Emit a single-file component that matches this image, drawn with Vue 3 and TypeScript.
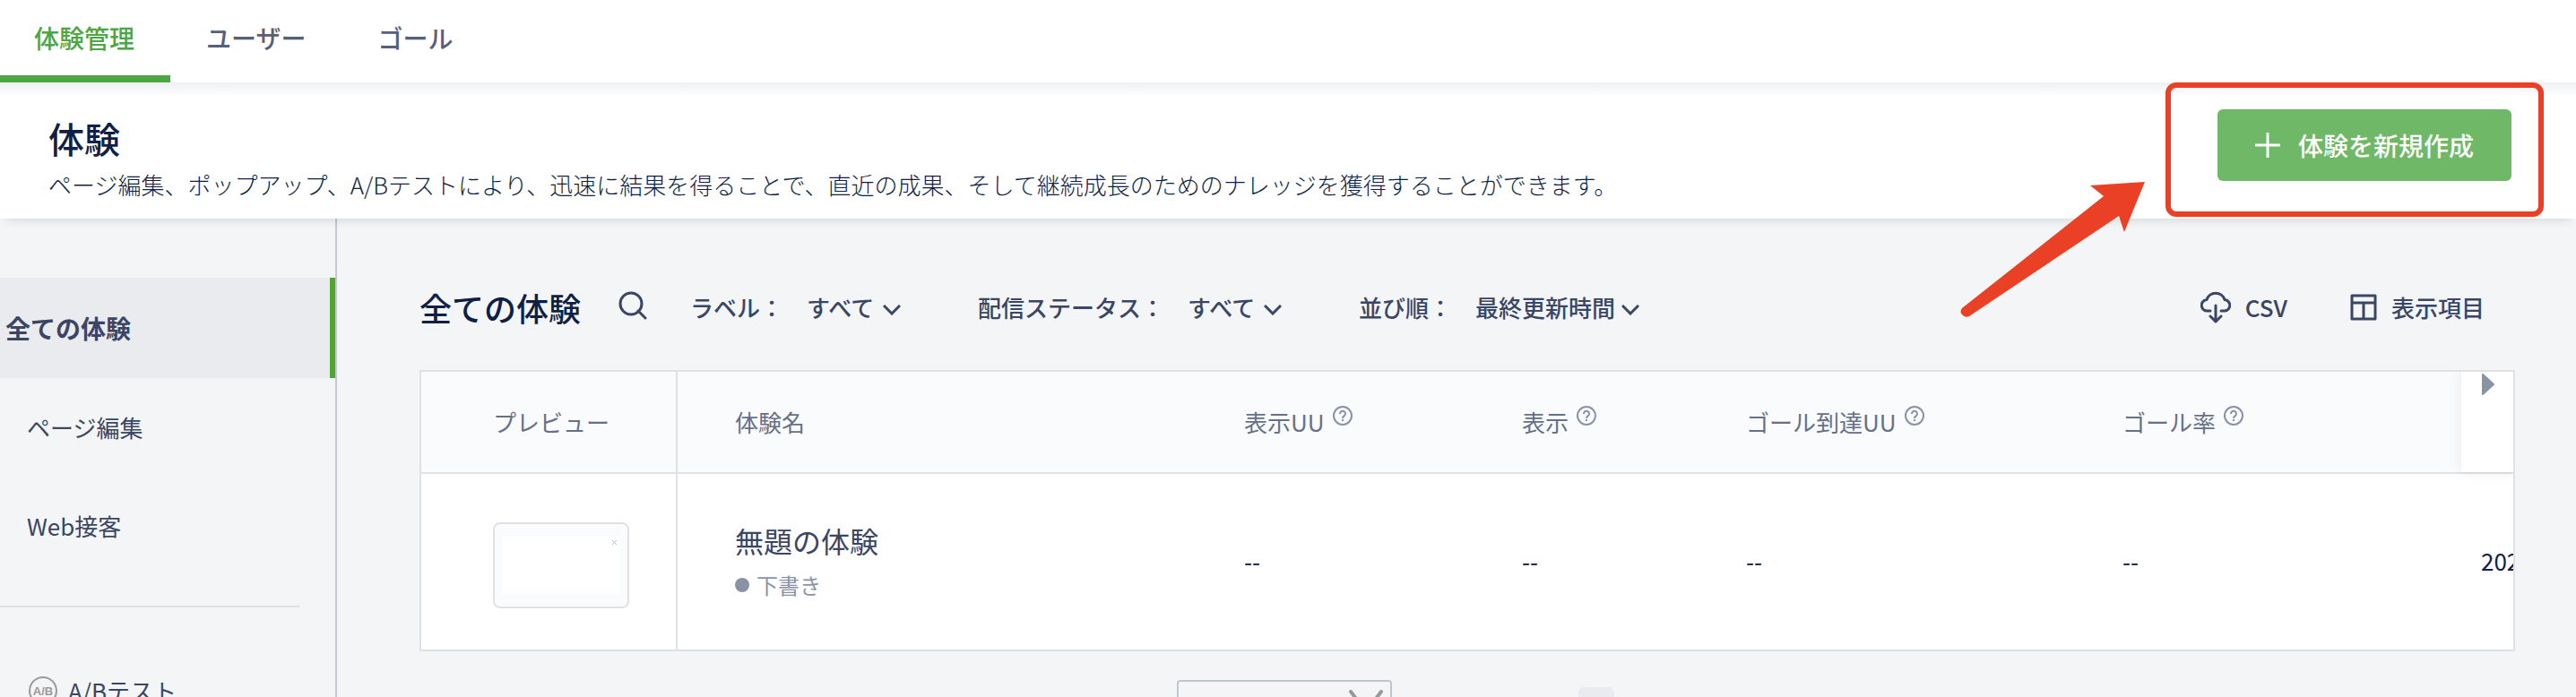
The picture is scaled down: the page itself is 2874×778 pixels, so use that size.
<script setup lang="ts">
import { ref } from 'vue'

interface Filter {
  id: string
  label: string
  value: string
}

interface Column {
  title: string
  help: boolean
  cls: string
}

const tabs = ['体験管理', 'ユーザー', 'ゴール']
const activeTab = ref(0)

const filters: Filter[] = [
  { id: 'label', label: 'ラベル：', value: 'すべて' },
  { id: 'status', label: '配信ステータス：', value: 'すべて' },
  { id: 'order', label: '並び順：', value: '最終更新時間' },
]

const columns: Column[] = [
  { title: 'プレビュー', help: false, cls: 'c-preview' },
  { title: '体験名', help: false, cls: 'c-name' },
  { title: '表示UU', help: true, cls: 'c-uu' },
  { title: '表示', help: true, cls: 'c-view' },
  { title: 'ゴール到達UU', help: true, cls: 'c-goal' },
  { title: 'ゴール率', help: true, cls: 'c-rate' },
  { title: '', help: false, cls: 'c-date' },
]
</script>

<template>
  <div class="app">
    <nav class="tabs">
      <a
        v-for="(tab, i) in tabs"
        :key="tab"
        href="#"
        class="tab"
        :class="{ active: i === activeTab }"
        @click.prevent="activeTab = i"
        >{{ tab }}</a
      >
    </nav>

    <header class="head">
      <div class="head-text">
        <h1>体験</h1>
        <p>ページ編集、ポップアップ、A/Bテストにより、迅速に結果を得ることで、直近の成果、そして継続成長のためのナレッジを獲得することができます。</p>
      </div>
      <div class="create-wrap">
        <button type="button" class="create">
          <svg width="28" height="28" viewBox="0 0 28 28" aria-hidden="true">
            <path d="M14 1v26M1 14h26" stroke="#fff" stroke-width="3" stroke-linecap="round" />
          </svg>
          <span>体験を新規作成</span>
        </button>
        <svg class="arrow" width="210" height="156" viewBox="0 0 210 156" aria-hidden="true">
          <path
            d="M207 2L146 6L161 18L3 143Q0 147 3 150Q6 154 11 152L178 40L184 58Z"
            fill="#ea4126"
          />
        </svg>
      </div>
    </header>

    <div class="body">
      <aside class="side">
        <a href="#" class="side-item current">全ての体験</a>
        <a href="#" class="side-item">ページ編集</a>
        <a href="#" class="side-item">Web接客</a>
        <hr />
        <a href="#" class="side-item ab">
          <svg width="36" height="36" viewBox="0 0 36 36" aria-hidden="true">
            <circle cx="18" cy="18" r="15" fill="none" stroke="#999" stroke-width="2" />
            <text x="18" y="23" text-anchor="middle" class="ab-text">A/B</text>
          </svg>
          <span>A/Bテスト</span>
        </a>
      </aside>

      <main class="main">
        <div class="toolbar">
          <h2>全ての体験</h2>
          <button type="button" class="icon-btn" aria-label="検索">
            <svg width="32" height="32" viewBox="0 0 32 32" fill="none" stroke="#3a4663" stroke-width="3">
              <circle cx="14" cy="14" r="12" />
              <path d="M22 22l8 8" stroke-linecap="round" />
            </svg>
          </button>
          <div v-for="f in filters" :key="f.id" class="filter">
            <label :for="f.id">{{ f.label }}</label>
            <div class="select">
              <select :id="f.id">
                <option>{{ f.value }}</option>
              </select>
              <svg width="20" height="12" viewBox="0 0 20 12" aria-hidden="true">
                <path d="M1 1l9 9l9-9" fill="none" stroke="#3a4663" stroke-width="3" />
              </svg>
            </div>
          </div>
          <div class="actions">
            <button type="button" class="action">
              <svg width="34" height="36" viewBox="1 0 34 36" fill="none" stroke="#3a4663" stroke-width="3" stroke-linecap="round" stroke-linejoin="round">
                <path d="M12 22H9a6 6 0 0 1-1-12.500a10.500 10.500 0 0 1 20 0A6 6 0 0 1 27 22h-3" />
                <path d="M18 16v17M12 28l6 6l6-6" />
              </svg>
              <span>CSV</span>
            </button>
            <button type="button" class="action">
              <svg width="30" height="30" viewBox="0 0 30 30" fill="none" stroke="#3a4663" stroke-width="3" stroke-linejoin="round">
                <path d="M2 2h26v26H2zM2 10h26M15 10v18" />
              </svg>
              <span>表示項目</span>
            </button>
          </div>
        </div>

        <div class="table-box">
          <table>
            <colgroup>
              <col v-for="c in columns" :key="c.cls" :class="c.cls" />
            </colgroup>
            <thead>
              <tr>
                <th v-for="c in columns" :key="c.cls" scope="col">
                  <span class="th">
                    {{ c.title }}
                    <svg v-if="c.help" class="help" width="24" height="24" viewBox="0 0 24 24" fill="none" stroke="#8a92a5" stroke-width="2">
                      <circle cx="12" cy="12" r="10" />
                      <path d="M9 10a3 3 0 1 1 5 2q-2 1-2 3" />
                      <path d="M12 16v2" />
                    </svg>
                  </span>
                </th>
              </tr>
            </thead>
            <tbody>
              <tr>
                <td>
                  <div class="thumb">
                    <div class="thumb-inner">
                      <svg width="5" height="5" viewBox="0 0 5 5"><path d="M0 0l5 5M5 0l-5 5" stroke="#bbb" /></svg>
                    </div>
                  </div>
                </td>
                <td>
                  <a href="#" class="name">無題の体験</a>
                  <div class="status"><i></i>下書き</div>
                </td>
                <td>--</td>
                <td>--</td>
                <td>--</td>
                <td>--</td>
                <td>202</td>
              </tr>
            </tbody>
          </table>
          <button type="button" class="scroll" aria-label="右へスクロール">
            <svg width="14" height="26" viewBox="0 0 14 26">
              <path d="M1 2v22l12-11z" fill="#8a92a5" stroke="#8a92a5" stroke-width="2" stroke-linejoin="round" />
            </svg>
          </button>
        </div>

        <div class="pager">
          <div class="page-size">
            <select aria-label="表示件数">
              <option>10 件/頁</option>
            </select>
            <svg width="38" height="28" viewBox="0 0 38 28" aria-hidden="true">
              <path d="M2 2l17 22L36 2" fill="none" stroke="#999" stroke-width="4" stroke-linecap="round" />
            </svg>
          </div>
          <button type="button" class="page-step">前へ</button>
          <button type="button" class="page-no" aria-label="1"></button>
          <button type="button" class="page-step">次へ</button>
        </div>
      </main>
    </div>
  </div>
</template>

<style>
html,
body {
  margin: 0;
  background: #f4f5f7;
  overflow: hidden;
}
</style>

<style scoped>
* {
  box-sizing: border-box;
}
.app {
  height: 100vh;
  overflow: hidden;
  display: flex;
  flex-direction: column;
  font-family: 'Noto Sans CJK JP', sans-serif;
  font-size: 26px;
  line-height: 40px;
  color: #3a4663;
}
a {
  color: inherit;
  text-decoration: none;
}
button,
select {
  font: inherit;
  color: inherit;
  background: none;
  border: 0;
  padding: 0;
  margin: 0;
  appearance: none;
}
svg {
  display: block;
  flex: none;
}
.tabs {
  position: relative;
  z-index: 3;
  display: flex;
  flex: none;
  height: 92px;
  background: #fff;
}
.tab {
  padding: 22px 40px 0;
  font-size: 28px;
  font-weight: 500;
  color: #566179;
  border-bottom: 8px solid transparent;
}
.tab:first-child {
  padding-left: 38px;
}
.tab.active {
  color: #4ba643;
  border-bottom-color: #4ba643;
}
.head {
  position: relative;
  z-index: 4;
  flex: none;
  display: flex;
  justify-content: space-between;
  height: 152px;
  padding: 0 36px 0 54px;
  background: linear-gradient(#eff0f3, #fff 16px);
  box-shadow: 0 8px 10px -6px rgba(0, 0, 0, 0.12);
}
.head-text {
  padding-top: 38px;
}
h1 {
  margin: 0;
  font-size: 40px;
  line-height: 48px;
  font-weight: 500;
  color: #0f1f45;
}
.head p {
  margin: 8px 0 0;
  font-weight: 300;
  color: #0f1f45;
  white-space: nowrap;
}
.create-wrap {
  position: relative;
  height: 150px;
  padding: 24px 30px 0 52px;
  border: 6px solid #ea4126;
  border-radius: 12px;
}
.create {
  display: flex;
  align-items: center;
  justify-content: center;
  gap: 20px;
  width: 328px;
  height: 80px;
  border-radius: 6px;
  background: #6fb868;
  color: #fff;
  font-size: 28px;
  font-weight: 500;
}
.arrow {
  position: absolute;
  right: 436px;
  top: 103px;
}
.body {
  flex: 1;
  display: flex;
  min-height: 0;
}
.side {
  flex: none;
  width: 376px;
  padding-top: 66px;
  border-right: 2px solid #c3c8d1;
}
.side-item {
  display: flex;
  align-items: center;
  height: 110px;
  padding-left: 30px;
}
.side-item.current {
  height: 112px;
  padding-left: 6px;
  background: #eaebef;
  border-right: 6px solid #4ea72e;
  font-size: 28px;
  font-weight: 700;
}
.side hr {
  margin: 34px 40px 38px 0;
  border: 0;
  border-top: 2px solid #dfe1e5;
}
.ab {
  gap: 10px;
}
.ab-text {
  font: 700 13px 'Liberation Sans', sans-serif;
  fill: #999;
}
.main {
  flex: 1;
  min-width: 0;
  padding: 75px 68px 0 92px;
}
.toolbar {
  display: flex;
  align-items: center;
  height: 48px;
  font-weight: 500;
}
h2 {
  margin: 0;
  font-size: 36px;
  line-height: 48px;
  font-weight: 500;
  color: #0f1f45;
}
.icon-btn {
  margin: 0 48px 4px 42px;
}
.filter {
  display: flex;
  margin-right: 86px;
}
.filter label {
  margin-right: 26px;
}
.select {
  display: flex;
  align-items: center;
  gap: 6px;
}
.select svg {
  margin-top: 6px;
}
.actions {
  display: flex;
  gap: 70px;
  margin-left: auto;
  margin-right: 34px;
}
.action {
  display: flex;
  align-items: center;
  gap: 16px;
}
.table-box {
  position: relative;
  margin-top: 46px;
  overflow: hidden;
  border: 2px solid #dfe1e5;
  background: #fff;
}
table {
  table-layout: fixed;
  width: 2600px;
  border-collapse: separate;
  border-spacing: 0;
}
.c-preview {
  width: 286px;
}
.c-name {
  width: 598px;
}
.c-uu {
  width: 310px;
}
.c-view {
  width: 250px;
}
.c-goal {
  width: 420px;
}
.c-rate {
  width: 400px;
}
th {
  height: 114px;
  padding: 0 0 0 34px;
  text-align: left;
  font-weight: 400;
  color: #667086;
  background: #fafbfd;
  border-bottom: 2px solid #dfe1e5;
}
th:first-child {
  padding: 0;
}
th:first-child .th {
  padding-left: 80px;
}
.th {
  display: flex;
  gap: 8px;
}
.help {
  margin-top: 1px;
}
td {
  height: 196px;
  padding: 0 0 2px 34px;
  color: #0f1f45;
}
th:first-child,
td:first-child {
  border-right: 2px solid #dfe1e5;
}
th:nth-child(2),
td:nth-child(2) {
  padding-left: 64px;
}
td:first-child {
  padding: 8px 0 0 80px;
}
.thumb {
  width: 152px;
  height: 96px;
  padding: 14px 8px;
  border: 2px solid #dfe1e5;
  border-radius: 8px;
  background: #fafbfd;
}
.thumb-inner {
  height: 64px;
  padding: 4px 4px 0 0;
  background: #fff;
}
.thumb-inner svg {
  margin-left: auto;
}
.name {
  display: block;
  font-size: 32px;
  line-height: 48px;
  color: #3a4663;
}
.status {
  display: flex;
  align-items: center;
  gap: 8px;
  margin-top: 6px;
  font-size: 24px;
  color: #8a92a5;
}
.status i {
  width: 16px;
  height: 16px;
  border-radius: 50%;
  background: #8a92a5;
}
.scroll {
  position: absolute;
  top: 0;
  right: -2px;
  display: flex;
  width: 60px;
  height: 112px;
  padding: 1px 0 0 23px;
  background: #fff;
  box-shadow: 0 0 14px rgba(0, 0, 0, 0.08);
}
.pager {
  display: flex;
  margin: 32px 0 0 845px;
}
.page-size {
  display: flex;
  justify-content: space-between;
  width: 240px;
  height: 64px;
  padding: 9px 8px 0 48px;
  border: 2px solid #c0c6cf;
  border-radius: 4px;
}
.page-step {
  width: 52px;
  height: 40px;
  margin: 11px 0 0 82px;
  color: #999;
}
.page-no {
  width: 40px;
  height: 56px;
  margin: 8px 0 0 74px;
  border-radius: 6px;
  background: #eaebef;
}
.page-no + .page-step {
  margin-left: 74px;
}
</style>
